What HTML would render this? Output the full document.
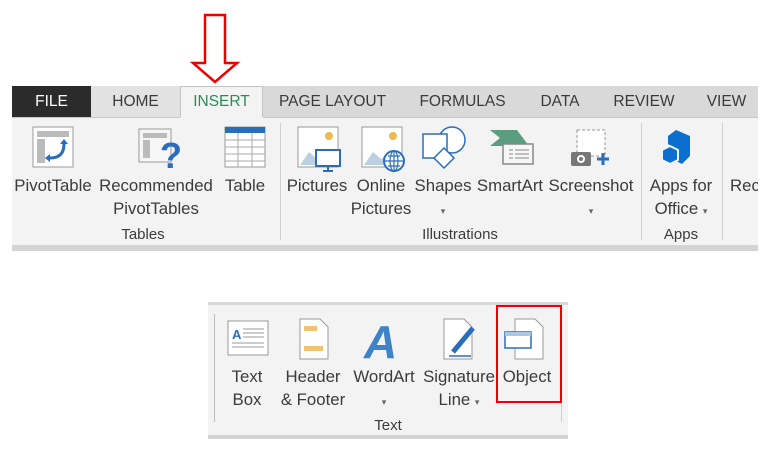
<!DOCTYPE html>
<html><head><meta charset="utf-8"><style>
*{margin:0;padding:0;box-sizing:border-box}
body{width:768px;height:449px;background:#fff;position:relative;overflow:hidden;font-family:"Liberation Sans",sans-serif;color:#444}
.a{position:absolute}
.t{position:absolute;font-size:16.8px;color:#3b3b3b;white-space:nowrap;transform:translateX(-50%);text-align:center;line-height:23px}
.tab{position:absolute;top:86px;height:31px;line-height:31px;font-size:15.5px;color:#3a3a3a;text-align:center}
.g{font-size:15px}
.sep{position:absolute;width:1px;background:#cfcfcf}
.dd{font-size:9px;color:#666}
</style></head><body>
<svg class="a" style="left:190px;top:12px" width="52" height="72"><path d="M15 3 H35 V51 H47 L25 70 L3 51 H15 Z" fill="none" stroke="#e00" stroke-width="2.5"/></svg>
<div class="a" style="left:12px;top:86px;width:746px;height:31px;background:#d9d9d9"></div>
<div class="a" style="left:12px;top:86px;width:79px;height:31px;background:#2b2b2b"></div>
<div class="a" style="left:91px;top:86px;width:89px;height:31px;background:#e2e2e2"></div>
<div class="a" style="left:180px;top:86px;width:83px;height:32px;background:#f3f3f3;border:1px solid #c4c4c4;border-bottom:none"></div>
<div class="a" style="left:12px;top:117px;width:746px;height:128px;background:#f3f3f3"></div>
<div class="a" style="left:12px;top:117px;width:168px;height:1px;background:#c8c8c8"></div>
<div class="a" style="left:263px;top:117px;width:495px;height:1px;background:#c8c8c8"></div>
<div class="a" style="left:12px;top:245px;width:746px;height:6px;background:#d4d4d4"></div>
<div class="tab" style="left:12px;width:79px;color:#fff">FILE</div>
<div class="tab" style="left:91px;width:89px">HOME</div>
<div class="tab" style="left:180px;width:83px;color:#2e8b57">INSERT</div>
<div class="tab" style="left:270px;width:125px">PAGE LAYOUT</div>
<div class="tab" style="left:405px;width:115px">FORMULAS</div>
<div class="tab" style="left:525px;width:70px">DATA</div>
<div class="tab" style="left:600px;width:88px">REVIEW</div>
<div class="tab" style="left:695px;width:63px">VIEW</div>
<div class="sep" style="left:280px;top:123px;height:117px"></div>
<div class="sep" style="left:641px;top:123px;height:117px"></div>
<div class="sep" style="left:722px;top:123px;height:117px"></div>
<svg class="a" style="left:32px;top:126px" width="42" height="42"><rect x="1" y="1" width="40" height="40" fill="#fff" stroke="#999"/><rect x="5" y="5" width="32" height="6" fill="#bbb"/><rect x="5" y="13" width="8" height="24" fill="#bbb"/><path d="M18 32 q14 0 14 -14" fill="none" stroke="#2a6ebb" stroke-width="3"/><path d="M28 18 l4 -5 4 5z M18 28 l-5 4 5 4z" fill="#2a6ebb"/></svg>
<svg class="a" style="left:138px;top:128px" width="46" height="42"><rect x="1" y="1" width="32" height="33" fill="#f6f6f6" stroke="#999"/><rect x="5" y="5" width="24" height="5" fill="#bbb"/><rect x="5" y="12" width="7" height="18" fill="#bbb"/><text x="22" y="40" font-size="36" font-weight="bold" fill="#2a6ebb" font-family="Liberation Sans">?</text></svg>
<svg class="a" style="left:224px;top:126px" width="42" height="42"><rect x="1" y="1" width="40" height="40" fill="#fff" stroke="#999"/><rect x="1" y="1" width="40" height="6" fill="#2a6ebb"/><path d="M1 14H41M1 21H41M1 28H41M1 35H41M14 7V41M28 7V41" stroke="#aaa"/></svg>
<svg class="a" style="left:297px;top:126px" width="46" height="46"><rect x="1" y="1" width="40" height="40" fill="#fff" stroke="#999"/><circle cx="32" cy="10" r="4" fill="#f0b94f"/><path d="M3 39 L12 26 L20 33 L30 26 V39Z" fill="#bcd0e4"/><rect x="19" y="24" width="24" height="16" fill="#fff" stroke="#2a6ebb" stroke-width="2"/><path d="M31 40v4M26 45h10" stroke="#2a6ebb" stroke-width="2"/></svg>
<svg class="a" style="left:361px;top:126px" width="46" height="46"><rect x="1" y="1" width="40" height="40" fill="#fff" stroke="#999"/><circle cx="32" cy="10" r="4" fill="#f0b94f"/><path d="M3 39 L12 26 L20 33 L30 26 V39Z" fill="#bcd0e4"/><circle cx="33" cy="35" r="10" fill="#fff" stroke="#2a6ebb" stroke-width="2"/><path d="M23 35h20M33 25v20M27 30h12M27 40h12" stroke="#2a6ebb" stroke-width="1.2" fill="none"/><ellipse cx="33" cy="35" rx="4" ry="10" fill="none" stroke="#2a6ebb" stroke-width="1.2"/></svg>
<svg class="a" style="left:420px;top:124px" width="48" height="48"><circle cx="32" cy="16" r="13" fill="#fff" stroke="#2a6ebb" stroke-width="1.5"/><rect x="3" y="10" width="24" height="24" fill="#fff" stroke="#2a6ebb" stroke-width="1.5"/><path d="M24 28 l10 10 -10 10 -10 -10z" fill="#fff" stroke="#2a6ebb" stroke-width="1.5" transform="translate(0,-4)"/></svg>
<svg class="a" style="left:489px;top:128px" width="46" height="40"><path d="M1 2 H28 L40 18 H1 L11 10Z" fill="#5a9e7f"/><rect x="14" y="16" width="30" height="20" fill="#f6f6f6" stroke="#888" stroke-width="1.5"/><path d="M20 22h4M26 22h14M20 26h4M26 26h14M20 30h4M26 30h14" stroke="#888"/></svg>
<svg class="a" style="left:570px;top:128px" width="44" height="42"><rect x="7" y="2" width="28" height="26" fill="#fff" stroke="#999" stroke-dasharray="3 2"/><rect x="1" y="24" width="20" height="14" rx="2" fill="#777"/><circle cx="11" cy="31" r="4" fill="#fff"/><circle cx="11" cy="31" r="2" fill="#777"/><path d="M27 31h12M33 25v12" stroke="#2a6ebb" stroke-width="3"/></svg>
<svg class="a" style="left:660px;top:128px" width="40" height="42"><path d="M16 2 L30 8 V28 L22 36 L14 32 V20 L8 16 V8Z" fill="#0b6fcf"/><path d="M2 22 L10 18 L18 22 V32 L10 36 L2 32Z" fill="#0b6fcf" stroke="#f3f3f3" stroke-width="2"/></svg>
<div class="t" style="left:53px;top:174px">PivotTable</div>
<div class="t" style="left:156px;top:174px">Recommended<br>PivotTables</div>
<div class="t" style="left:245px;top:174px">Table</div>
<div class="t g" style="left:143px;top:223px">Tables</div>
<div class="t" style="left:317px;top:174px">Pictures</div>
<div class="t" style="left:381px;top:174px">Online<br>Pictures</div>
<div class="t" style="left:443px;top:174px">Shapes<br><span class="dd">▾</span></div>
<div class="t" style="left:510px;top:174px">SmartArt</div>
<div class="t" style="left:591px;top:174px">Screenshot<br><span class="dd">▾</span></div>
<div class="t g" style="left:460px;top:223px">Illustrations</div>
<div class="t" style="left:681px;top:174px">Apps for<br>Office <span class="dd">▾</span></div>
<div class="t g" style="left:681px;top:223px">Apps</div>
<div class="a" style="left:730px;top:174px;font-size:16.8px;line-height:23px;color:#3b3b3b;width:28px;overflow:hidden;white-space:nowrap">Recommended</div>
<div class="a" style="left:208px;top:302px;width:360px;height:135px;background:#f3f3f3"></div>
<div class="a" style="left:208px;top:302px;width:360px;height:3px;background:#d8d8d8"></div>
<div class="a" style="left:208px;top:435px;width:360px;height:4px;background:#d4d4d4"></div>
<div class="sep" style="left:214px;top:314px;height:108px;background:#bbb"></div>
<div class="sep" style="left:561px;top:314px;height:108px"></div>
<svg class="a" style="left:227px;top:320px" width="44" height="38"><rect x="1" y="1" width="40" height="34" fill="#fff" stroke="#999"/><text x="5" y="19" font-size="13" font-weight="bold" fill="#2a6ebb" font-family="Liberation Sans">A</text><path d="M16 9h21M16 13h21M16 17h21M5 23h32M5 27h32" stroke="#999"/></svg>
<svg class="a" style="left:299px;top:318px" width="32" height="44"><path d="M1 1H21L29 9V41H1Z" fill="#fff" stroke="#999"/><rect x="5" y="8" width="13" height="5" fill="#f0c271"/><rect x="5" y="28" width="19" height="5" fill="#f0c271"/></svg>
<svg class="a" style="left:362px;top:318px" width="40" height="44"><text x="2" y="40" font-size="46" font-style="italic" font-weight="bold" fill="#3e82c8" font-family="Liberation Sans">A</text></svg>
<svg class="a" style="left:443px;top:318px" width="40" height="44"><path d="M1 1H21L29 9V41H1Z" fill="#fff" stroke="#999"/><path d="M10 34 L30 10" stroke="#2a6ebb" stroke-width="5"/><path d="M6 38h22" stroke="#2a6ebb" stroke-width="1.5"/></svg>
<svg class="a" style="left:503px;top:318px" width="44" height="44"><path d="M12 1H32L40 9V41H12Z" fill="#fff" stroke="#999"/><rect x="2" y="14" width="26" height="16" fill="#fff" stroke="#2a6ebb" stroke-width="1.5"/><rect x="2" y="14" width="26" height="4" fill="#a9c8e8"/></svg>
<div class="t" style="left:247px;top:365px">Text<br>Box</div>
<div class="t" style="left:313px;top:365px">Header<br>&amp; Footer</div>
<div class="t" style="left:384px;top:365px">WordArt<br><span class="dd">▾</span></div>
<div class="t" style="left:459px;top:365px">Signature<br>Line <span class="dd">▾</span></div>
<div class="t" style="left:527px;top:365px">Object</div>
<div class="t g" style="left:388px;top:414px">Text</div>
<div class="a" style="left:496px;top:305px;width:66px;height:98px;border:2px solid #e00"></div>
</body></html>
